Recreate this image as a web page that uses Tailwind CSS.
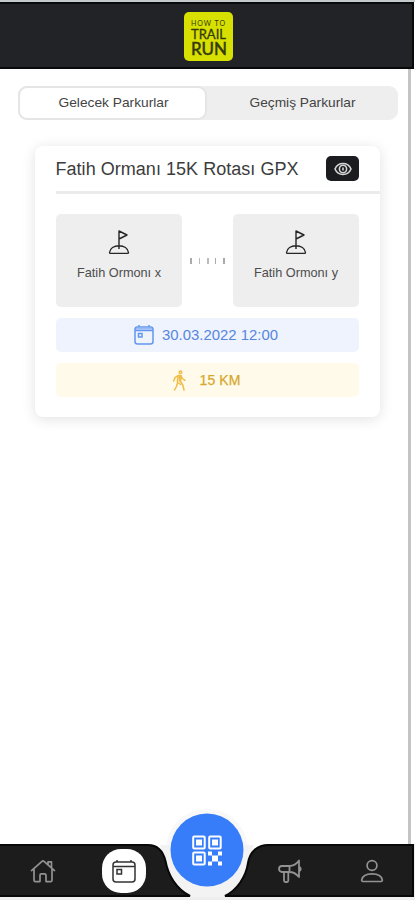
<!DOCTYPE html>
<html lang="tr">
<head>
<meta charset="utf-8">
<meta name="viewport" content="width=device-width, initial-scale=1">
<title>Parkurlar</title>
<script src="https://cdn.jsdelivr.net/npm/@tailwindcss/browser@4"></script>
</head>
<body class="bg-white">
<div class="flex h-[900px] w-[415px] flex-col overflow-hidden bg-white pt-[2px] font-['Liberation_Sans',Arial,sans-serif] text-[#444] shadow-[inset_0_2px_0_#c5c9cc]">
  <header class="flex h-[67px] w-[414px] shrink-0 items-center justify-center border-2 border-l-0 border-[#08090b] bg-[#212327]">
    <svg class="mt-px ml-[4px] h-[49px] w-[49px]" viewBox="0 0 49 49" font-family="Lato, sans-serif" fill="#343b0c">
      <rect width="49" height="49" rx="5" fill="#d7e000"/>
      <text x="7" y="13.500" font-size="7" textLength="34">HOW TO</text>
      <text x="7" y="27" font-size="14" stroke="#343b0c" stroke-width=".3" textLength="35" lengthAdjust="spacingAndGlyphs">TRAIL</text>
      <text x="7" y="43" font-size="16.500" stroke="#343b0c" stroke-width=".5" textLength="36" lengthAdjust="spacingAndGlyphs">RUN</text>
    </svg>
  </header>

  <main class="flex w-[411px] flex-1 flex-col border-r-[3px] border-[#c4c4c4] pt-[17px]">
    <nav class="ml-[18px] flex h-[34px] w-[380px] rounded-[9px] bg-[#eeeeee] leading-none">
      <div class="flex w-[189px] items-center justify-center rounded-[9px] border-2 border-[#e5e5e5] bg-white"><svg class="h-4 w-[110px] overflow-visible" fill="#444"><text x="0.500" y="12.300" font-size="13.600" textLength="110" lengthAdjust="spacingAndGlyphs">Gelecek Parkurlar</text></svg></div>
      <div class="flex flex-1 items-center justify-center"><svg class="h-4 w-[106px] overflow-visible" fill="#444"><text x="-0.500" y="12.300" font-size="13.600" textLength="106" lengthAdjust="spacingAndGlyphs">Geçmiş Parkurlar</text></svg></div>
    </nav>

    <section class="mt-[26px] ml-[35px] h-[271px] w-[345px] rounded-[8px] bg-white px-[21px] shadow-[0_2px_14px_rgba(0,0,0,0.12)]">
      <div class="-mr-[21px] flex h-[48px] items-center justify-between border-b-3 border-[#ebebeb] pr-[21px]">
        <svg class="h-[22px] w-[244px] overflow-visible" fill="#3c3c3c"><text x="-0.500" y="17" font-size="18" textLength="243">Fatih Ormanı 15K Rotası GPX</text></svg>
        <div class="flex h-[25px] w-[33px] items-center justify-center rounded-[5px] bg-[#1b1c1f]">
          <svg class="h-[14px] w-[18px]" viewBox="0 0 18 14" fill="none" stroke="#d5d5d5" stroke-width="1.600"><path d="M1 7C2.500 3.500 5.500 1.500 9 1.500S15.500 3.500 17 7C15.500 10.500 12.500 12.500 9 12.500S2.500 10.500 1 7Z"/><ellipse cx="9" cy="7" rx="3.600" ry="3.800"/><path d="M9 5.500v3"/></svg>
        </div>
      </div>

      <div class="mt-[20px] flex h-[93px] items-center justify-between">
        <div class="flex h-[93px] w-[126px] flex-col items-center rounded-[5px] bg-[#eeeeee] pt-[15px]">
          <svg class="h-[26px] w-[22px]" viewBox="0 0 22 26" fill="none" stroke="#252525" stroke-width="1.4" stroke-linejoin="round"><path d="M11 20V2l8 4-8 4M1.500 23.500c.6-4 4.500-6.700 9.500-6.700s8.900 2.700 9.500 6.700c0 .6-.4.900-1 .9H2.500c-.6 0-1-.3-1-.9Z"/></svg>
          <svg class="mt-[9px] h-4 w-[84px] overflow-visible" fill="#4d4d4d"><text x="0" y="13" font-size="13" textLength="84" lengthAdjust="spacingAndGlyphs">Fatih Ormonı x</text></svg>
        </div>
        <div class="flex w-[35px] justify-between">
          <i class="h-[6px] w-[2px] bg-[#aaa]"></i><i class="h-[6px] w-px bg-[#bbb]"></i><i class="h-[6px] w-[2px] bg-[#bbb]"></i><i class="h-[6px] w-px bg-[#aaa]"></i><i class="h-[6px] w-[2px] bg-[#aaa]"></i>
        </div>
        <div class="flex h-[93px] w-[126px] flex-col items-center rounded-[5px] bg-[#eeeeee] pt-[15px]">
          <svg class="h-[26px] w-[22px]" viewBox="0 0 22 26" fill="none" stroke="#252525" stroke-width="1.4" stroke-linejoin="round"><path d="M11 20V2l8 4-8 4M1.500 23.500c.6-4 4.500-6.700 9.500-6.700s8.900 2.700 9.500 6.700c0 .6-.4.900-1 .9H2.500c-.6 0-1-.3-1-.9Z"/></svg>
          <svg class="mt-[9px] h-4 w-[84px] overflow-visible" fill="#4d4d4d"><text x="0" y="13" font-size="13" textLength="84" lengthAdjust="spacingAndGlyphs">Fatih Ormonı y</text></svg>
        </div>
      </div>

      <div class="mt-[11px] flex h-[34px] items-center rounded-[5px] bg-[#eef3fe] pl-[78px]">
        <svg class="h-[20px] w-[20px]" viewBox="0 0 20 20" fill="none" stroke="#6296ee" stroke-width="1.500"><rect x="1" y="2" width="18" height="17" rx="2.500"/><path d="M1 5.500h18M5 0v2M15 0v2" /><path d="M2 3.700h16" stroke="#98baf5" stroke-width="2"/><rect x="4.500" y="8.500" width="3.500" height="3.500"/></svg>
        <svg class="ml-[8px] h-[18px] w-[116px] overflow-visible" fill="#5786de"><text x="0" y="14" font-size="14.800" textLength="116" lengthAdjust="spacingAndGlyphs">30.03.2022 12:00</text></svg>
      </div>
      <div class="mt-[11px] flex h-[34px] items-center rounded-[5px] bg-[#fffaea] pl-[116px]">
        <svg class="h-[21px] w-[15px]" viewBox="0 0 15 21" fill="none" stroke="#efbd48" stroke-width="1.500" stroke-linecap="round" stroke-linejoin="round"><circle cx="8.500" cy="2.300" r="1.300"/><path d="M6 5.500 3 7.700 1.700 11M6 5.500h3l1.300 3 2.700 1.800M6 5.500 5.300 12M5.300 13.500l-.8 3-2 3.500M9 5.500l-.5 6 2.300 3.500 1.200 5M5.300 12l3.200 2.500M7.500 6v5"/></svg>
        <svg class="ml-[12px] h-[18px] w-[42px] overflow-visible" fill="#d5a82c" stroke="#d5a82c" stroke-width=".25"><text x="0.500" y="14" font-size="14" textLength="41">15 KM</text></svg>
      </div>
    </section>
  </main>

  <footer class="relative h-[56px] w-[415px] shrink-0 bg-[#eeeeee]">
    <svg class="absolute -top-[40px] left-0 h-[96px] w-[415px]" viewBox="0 804 415 96">
      <path d="M411 804h4v40h-4z" fill="#fff"/>
      <path d="M408 804h3v40h-3z" fill="#c4c4c4"/>
      <path d="M0 844H414V897H0Z" fill="#fff"/>
      <circle cx="207" cy="850" r="41" fill="#f8f8f8"/>
      <path d="M160 845H254L248 864C245 878 237 890 225 897H190C176 889 168 877 165.500 862Z" fill="#f3f3f3"/>
      <path d="M-2 845H148C157 845 163 851 165.500 861C168 875 176 889 190 896H-2Z" fill="#1c1c1d" stroke="#080808" stroke-width="2"/>
      <path d="M413 845H268C258 845 250 851 248 863C246 877 237 890 225 896H413Z" fill="#1c1c1d" stroke="#080808" stroke-width="2"/>
      <path d="M0 897h415v3H0z" fill="#eee"/>
      <circle cx="207" cy="850" r="36.500" fill="#377dfa"/>
    </svg>
    <div class="relative flex h-[54px] items-center">
      <svg class="ml-[30px] h-[25px] w-[26px]" viewBox="0 0 26 26" preserveAspectRatio="none" fill="none" stroke="#929292" stroke-width="1.700" stroke-linejoin="round" stroke-linecap="round"><path d="M1.500 12 12 2.500a1.500 1.500 0 0 1 2 0L24.500 12M18 5.500V3h3.500v6M4 10.500V22a1.500 1.500 0 0 0 1.500 1.500H10V17a1.500 1.500 0 0 1 1.500-1.500h3A1.500 1.500 0 0 1 16 17v6.500h4.500A1.500 1.500 0 0 0 22 22V10.500"/></svg>
      <div class="ml-[46px] flex h-[44px] w-[44px] items-center justify-center rounded-[19px] bg-white">
        <svg class="h-[24px] w-[24px]" viewBox="0 0 24 24" fill="none" stroke="#333" stroke-width="1.500"><rect x="1" y="3" width="22" height="20" rx="3"/><path d="M1 7.500h22M5 1v2M19 1v2"/><rect x="5" y="10.500" width="4.500" height="4.500"/></svg>
      </div>
      <svg class="-mt-[41px] ml-[46px] h-[31px] w-[30px]" viewBox="0 0 30 31" fill="none" stroke="#fff" stroke-width="2"><rect x="1.200" y="1.500" width="11.500" height="12" rx="1"/><rect x="17.200" y="1.500" width="11.500" height="12" rx="1"/><rect x="1.200" y="17.500" width="11.500" height="12" rx="1"/><path d="M4 4.500h6v6H4zM20 4.500h6v6h-6zM4 20.500h6v6H4z" fill="#fff" stroke="none"/><path d="M16 16.500h4v4h-4zM26 16.500h4v4h-4zM20 20.500h6v6h-6zM16 26.500h4v4h-4zM26 26.500h4v4h-4z" fill="#fff" stroke="none"/></svg>
      <svg class="ml-[56px] h-[24px] w-[24px]" viewBox="0 0 24 24" fill="none" stroke="#929292" stroke-width="1.800" stroke-linejoin="round"><path d="M4 7h7.500c4 0 7-2 9.500-5.500V18c-2.500-3-5.500-5-9.500-5H4a3 3 0 0 1 0-6ZM11.500 7v6M21 8c2.300.5 2.300 3.500 0 4M6 13v8.500c0 .8.500 1.500 1.500 1.500h1.500c.8 0 1.300-.6 1.300-1.500V13"/></svg>
      <svg class="ml-[58px] h-[24px] w-[24px]" viewBox="0 0 24 24" fill="none" stroke="#929292" stroke-width="1.700" stroke-linejoin="round"><circle cx="12" cy="6.500" r="4.900"/><path d="M3 22.500c-1 0-1.500-.6-1.300-1.600.8-3.800 4.800-6 10.300-6s9.500 2.200 10.300 6c.2 1-.3 1.600-1.300 1.600Z"/></svg>
    </div>
  </footer>
</div>
</body>
</html>
